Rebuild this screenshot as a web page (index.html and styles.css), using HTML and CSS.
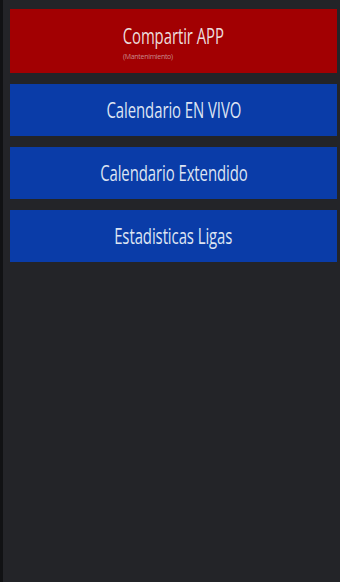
FILE: index.html
```html
<!DOCTYPE html>
<html lang="es">
<head>
<meta charset="utf-8">
<title>Menu</title>
<link rel="stylesheet" href="styles.css">
</head>
<body>
<div class="screen">
  <div class="menu">
    <button class="btn btn-red">
      <span class="label">Compartir APP</span>
      <span class="sub">(Mantenimiento)</span>
    </button>
    <button class="btn btn-blue"><span class="label">Calendario EN VIVO</span></button>
    <button class="btn btn-blue"><span class="label">Calendario Extendido</span></button>
    <button class="btn btn-blue"><span class="label">Estadisticas Ligas</span></button>
  </div>
</div>
</body>
</html>
```

FILE: styles.css
```css
html, body {
  margin: 0;
  padding: 0;
  height: 100%;
  background: #232428;
}
.screen {
  height: 582px;
  width: 340px;
  box-sizing: border-box;
  border-left: 3px solid #111214;
  background: #232428;
  padding: 9px 3px 0 7px;
}
.menu {
  display: flex;
  flex-direction: column;
  gap: 11px;
}
.btn {
  border: 0;
  margin: 0;
  padding: 0;
  display: flex;
  flex-direction: column;
  align-items: center;
  justify-content: center;
  font-family: "Open Sans", "Liberation Sans", sans-serif;
  color: #e6e6ee;
  width: 100%;
}
.btn-red {
  background: #a20002;
  height: 64px;
  color: #ecdcdc;
  justify-content: flex-start;
  padding-top: 15px;
  box-sizing: border-box;
}
.btn-blue {
  background: #0a3ca8;
  height: 52px;
  color: #dde4f2;
}
.label {
  font-size: 21px;
  line-height: 24px;
  display: inline-block;
  transform: scaleX(0.71);
  letter-spacing: -0.1px;
  white-space: nowrap;
}
.sub {
  width: 101px;
  text-align: left;
  font-size: 7px;
  line-height: 8px;
  margin-top: 5px;
  color: #c98a8a;
  display: block;
  letter-spacing: -0.3px;
  white-space: nowrap;
}
```
